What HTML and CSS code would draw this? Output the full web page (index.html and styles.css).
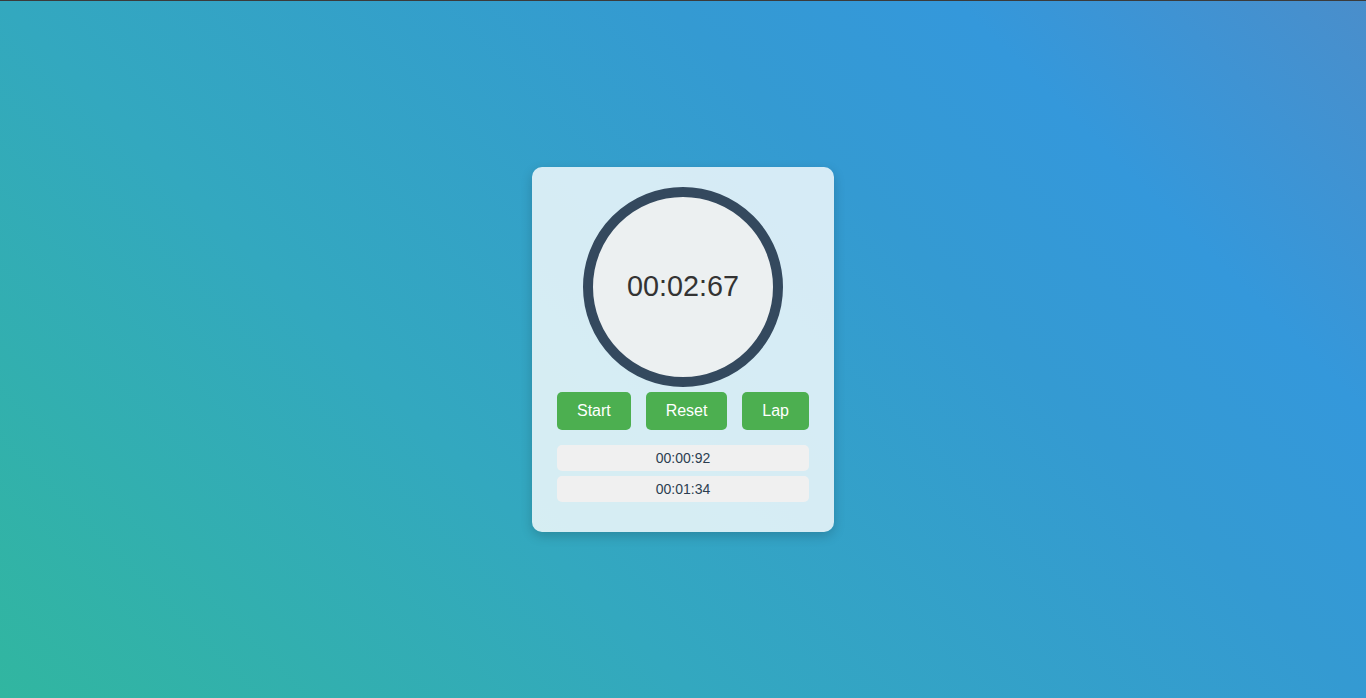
FILE: index.html
```html
<!DOCTYPE html>
<html lang="en">
<head>
<meta charset="UTF-8">
<title>Stopwatch</title>
<link rel="stylesheet" href="styles.css">
</head>
<body>
<main class="page">
  <section class="card">
    <div class="dial">
      <span class="time">00:02:67</span>
    </div>
    <div class="controls">
      <button class="btn">Start</button>
      <button class="btn">Reset</button>
      <button class="btn">Lap</button>
    </div>
    <ul class="laps">
      <li class="lap">00:00:92</li>
      <li class="lap">00:01:34</li>
    </ul>
  </section>
</main>
</body>
</html>
```
FILE: styles.css
```css
* { box-sizing: border-box; }
html, body { margin: 0; padding: 0; height: 100%; }
body {
  font-family: "Liberation Sans", Arial, sans-serif;
  background: linear-gradient(45deg, #31b6a0 0%, #33a8bf 33.8%, #349ad2 66%, #3498db 80%, #4a8ecb 100%);
  box-shadow: inset 0 1px 0 #3b3b3b;
}
.page {
  height: 100vh;
  display: flex;
  align-items: center;
  justify-content: center;
}
.card {
  width: 302px;
  padding: 20px 25px 30px;
  background: rgba(255, 255, 255, 0.8);
  border-radius: 10px;
  box-shadow: 0 4px 12px rgba(0, 0, 0, 0.18);
  display: flex;
  flex-direction: column;
}
.dial {
  width: 200px;
  height: 200px;
  margin: 0 auto 5px;
  border: 10px solid #34495e;
  border-radius: 50%;
  background: #ecf0f1;
  display: flex;
  align-items: center;
  justify-content: center;
}
.time {
  font-size: 28.8px;
  color: #333;
}
.controls {
  display: flex;
  justify-content: space-between;
  margin-bottom: 15px;
}
.btn {
  font-family: "Liberation Sans", Arial, sans-serif;
  font-size: 16px;
  line-height: 18px;
  padding: 10px 20px;
  border: none;
  border-radius: 5px;
  background: #4caf50;
  color: #fff;
}
.laps {
  list-style: none;
  margin: 0;
  padding: 0;
  display: flex;
  flex-direction: column;
  gap: 5px;
}
.lap {
  background: #f0f0f0;
  border-radius: 5px;
  font-size: 14px;
  line-height: 16px;
  padding: 5px;
  text-align: center;
  color: #2c3e50;
}
```
